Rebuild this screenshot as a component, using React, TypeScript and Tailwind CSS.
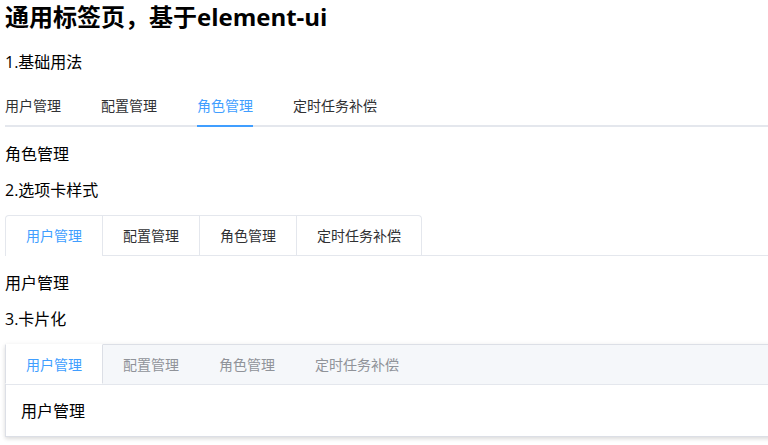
import { useState } from "react";

const tabs = ["用户管理", "配置管理", "角色管理", "定时任务补偿"];

const font = "font-['Open_Sans','Noto_Sans_CJK_SC',sans-serif]";

function BasicTabs() {
  const [active, setActive] = useState(2);
  return (
    <div className="mt-[13px]">
      <div className="relative flex h-10 border-b-2 border-[#e4e7ed]">
        {tabs.map((t, i) => (
          <div
            key={t}
            onClick={() => setActive(i)}
            className={
              "relative -mb-[2px] cursor-pointer text-sm leading-[38px] " +
              (i === 0 ? "pr-5" : i === tabs.length - 1 ? "pl-5" : "px-5") +
              (active === i ? " text-[#409eff]" : " text-[#303133]")
            }
          >
            <span className="relative inline-block h-10">
              {t}
              {active === i && <span className="absolute bottom-0 left-0 right-0 h-[2px] bg-[#409eff]" />}
            </span>
          </div>
        ))}
      </div>
      <p className="mt-4 text-base leading-[22px] text-black">{tabs[active]}</p>
    </div>
  );
}

function CardTabs() {
  const [active, setActive] = useState(0);
  return (
    <div className="mt-[13px]">
      <div className="flex border-b border-[#e4e7ed]">
        <div className="-mb-px flex rounded-t border border-b-0 border-[#e4e7ed]">
          {tabs.map((t, i) => (
            <div
              key={t}
              onClick={() => setActive(i)}
              className={
                "h-10 cursor-pointer border-b px-5 text-sm leading-[39px] " +
                (i > 0 ? "border-l border-l-[#e4e7ed] " : "") +
                (active === i ? "border-b-white text-[#409eff]" : "border-b-transparent text-[#303133]")
              }
            >
              {t}
            </div>
          ))}
        </div>
      </div>
      <p className="mt-4 text-base leading-[22px] text-black">{tabs[active]}</p>
    </div>
  );
}

function BorderCardTabs() {
  const [active, setActive] = useState(0);
  return (
    <div className="mt-[13px] border border-[#dcdfe6] bg-white shadow-[0_2px_4px_rgba(0,0,0,0.12),0_0_6px_rgba(0,0,0,0.04)]">
      <div className="flex h-10 border-b border-[#e4e7ed] bg-[#f5f7fa]">
        {tabs.map((t, i) => (
          <div
            key={t}
            onClick={() => setActive(i)}
            className={
              "-mt-px h-10 cursor-pointer border-y border-y-transparent text-sm leading-[39px] " +
              (active === i
                ? "border-x border-x-[#dcdfe6] bg-white px-5 text-[#409eff] " + (i === 0 ? "-ml-px" : "-mx-px")
                : "px-5 text-[#909399]")
            }
          >
            {t}
          </div>
        ))}
      </div>
      <div className="p-[15px] pt-4">
        <p className="text-base leading-5 text-black">{tabs[active]}</p>
      </div>
    </div>
  );
}

export default function App() {
  return (
    <div className={"h-[445px] w-[768px] overflow-hidden bg-white " + font}>
      <div className="w-[790px] pl-[5px]">
        <h2 className="text-2xl font-bold leading-[34px] text-black">通用标签页，基于element-ui</h2>

        <p className="mt-4 text-base leading-6 text-black">1.基础用法</p>
        <BasicTabs />

        <p className="mt-[13px] text-base leading-6 text-black">2.选项卡样式</p>
        <CardTabs />

        <p className="mt-[13px] text-base leading-6 text-black">3.卡片化</p>
        <BorderCardTabs />
      </div>
    </div>
  );
}
